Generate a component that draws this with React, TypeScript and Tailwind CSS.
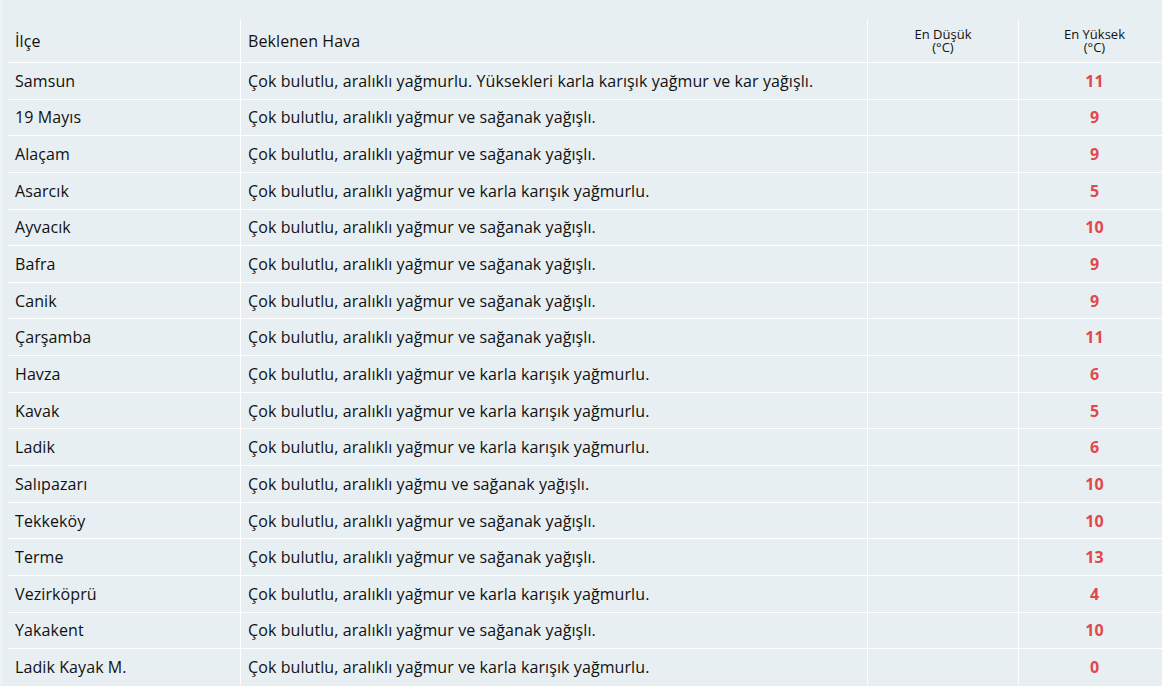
import React from "react";

const rows: [string, string, string, string][] = [
  ["Samsun", "Çok bulutlu, aralıklı yağmurlu. Yüksekleri karla karışık yağmur ve kar yağışlı.", "", "11"],
  ["19 Mayıs", "Çok bulutlu, aralıklı yağmur ve sağanak yağışlı.", "", "9"],
  ["Alaçam", "Çok bulutlu, aralıklı yağmur ve sağanak yağışlı.", "", "9"],
  ["Asarcık", "Çok bulutlu, aralıklı yağmur ve karla karışık yağmurlu.", "", "5"],
  ["Ayvacık", "Çok bulutlu, aralıklı yağmur ve sağanak yağışlı.", "", "10"],
  ["Bafra", "Çok bulutlu, aralıklı yağmur ve sağanak yağışlı.", "", "9"],
  ["Canik", "Çok bulutlu, aralıklı yağmur ve sağanak yağışlı.", "", "9"],
  ["Çarşamba", "Çok bulutlu, aralıklı yağmur ve sağanak yağışlı.", "", "11"],
  ["Havza", "Çok bulutlu, aralıklı yağmur ve karla karışık yağmurlu.", "", "6"],
  ["Kavak", "Çok bulutlu, aralıklı yağmur ve karla karışık yağmurlu.", "", "5"],
  ["Ladik", "Çok bulutlu, aralıklı yağmur ve karla karışık yağmurlu.", "", "6"],
  ["Salıpazarı", "Çok bulutlu, aralıklı yağmu ve sağanak yağışlı.", "", "10"],
  ["Tekkeköy", "Çok bulutlu, aralıklı yağmur ve sağanak yağışlı.", "", "10"],
  ["Terme", "Çok bulutlu, aralıklı yağmur ve sağanak yağışlı.", "", "13"],
  ["Vezirköprü", "Çok bulutlu, aralıklı yağmur ve karla karışık yağmurlu.", "", "4"],
  ["Yakakent", "Çok bulutlu, aralıklı yağmur ve sağanak yağışlı.", "", "10"],
  ["Ladik Kayak M.", "Çok bulutlu, aralıklı yağmur ve karla karışık yağmurlu.", "", "0"],
];

export default function App() {
  return (
    <div
      className="w-[1162px] h-[686px] overflow-hidden bg-[#e8eff2] text-[#111] flex"
      style={{ fontFamily: '"Open Sans", "Noto Sans", sans-serif' }}
    >
      <div className="w-[2px] shrink-0 bg-[#eef3f5]" />
      <div className="pl-[6px] pt-[20px] shrink-0">
        <div className="w-[1162px]">
          {/* Header */}
          <div className="flex h-[42px] tracking-[0.09px]">
            <div className="w-[233px] shrink-0 flex items-center px-[7px] text-[16px] border-r border-white">
              İlçe
            </div>
            <div className="w-[627px] shrink-0 flex items-center px-[7px] text-[16px] border-r border-white">
              Beklenen Hava
            </div>
            <div className="w-[151px] shrink-0 flex flex-col items-center justify-center pb-[1px] text-[13px] leading-[13px] tracking-normal border-r border-white">
              <span>En Düşük</span>
              <span>(°C)</span>
            </div>
            <div className="w-[151px] shrink-0 flex flex-col items-center justify-center pb-[1px] text-[13px] leading-[13px] tracking-normal">
              <span>En Yüksek</span>
              <span>(°C)</span>
            </div>
          </div>

          {/* Body */}
          {rows.map(([ilce, hava, min, max]) => (
            <div key={ilce} className="flex h-[36.65px] border-t border-white text-[16px] tracking-[0.09px]">
              <div className="w-[233px] shrink-0 flex items-center px-[7px] border-r border-white">
                {ilce}
              </div>
              <div className="w-[627px] shrink-0 flex items-center px-[7px] border-r border-white">
                {hava}
              </div>
              <div className="w-[151px] shrink-0 flex items-center justify-center border-r border-white">
                {min}
              </div>
              <div className="w-[151px] shrink-0 flex items-center justify-center font-bold text-[#e2474b]">
                {max}
              </div>
            </div>
          ))}
        </div>
      </div>
    </div>
  );
}
